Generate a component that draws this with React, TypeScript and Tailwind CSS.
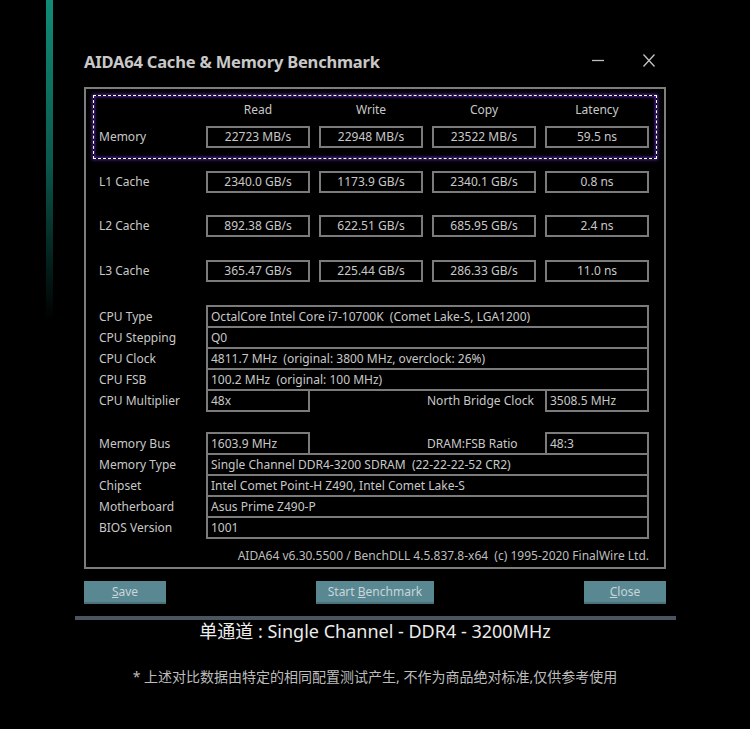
import React from 'react';

type CacheRow = { label: string; values: string[] };

const columns = ['Read', 'Write', 'Copy', 'Latency'];

const memoryRow: CacheRow = {
  label: 'Memory',
  values: ['22723 MB/s', '22948 MB/s', '23522 MB/s', '59.5 ns'],
};

const cacheRows: CacheRow[] = [
  { label: 'L1 Cache', values: ['2340.0 GB/s', '1173.9 GB/s', '2340.1 GB/s', '0.8 ns'] },
  { label: 'L2 Cache', values: ['892.38 GB/s', '622.51 GB/s', '685.95 GB/s', '2.4 ns'] },
  { label: 'L3 Cache', values: ['365.47 GB/s', '225.44 GB/s', '286.33 GB/s', '11.0 ns'] },
];

const grid = 'grid grid-cols-[98px_104px_104px_104px_104px] gap-x-[9px] items-center';
const box = 'border-2 border-[#7b7b7b] flex items-center whitespace-pre';

const ValueRow = ({ row, className = '' }: { row: CacheRow; className?: string }) => (
  <div className={`${grid} h-[22px] ${className}`}>
    <div>{row.label}</div>
    {row.values.map((v) => (
      <div key={v} className={`${box} h-[22px] justify-center`}>
        {v}
      </div>
    ))}
  </div>
);

// one line of the system info table; `first` keeps its top border, the rest overlap
const InfoRow = ({ label, value, first }: { label: string; value: string; first?: boolean }) => (
  <div className={`${grid} h-[23px] ${first ? '' : '-mt-[2px]'}`}>
    <div>{label}</div>
    <div className={`${box} col-span-4 h-[23px] px-[3px]`}>{value}</div>
  </div>
);

const SplitRow = ({
  label,
  value,
  label2,
  value2,
  first,
}: {
  label: string;
  value: string;
  label2: string;
  value2: string;
  first?: boolean;
}) => (
  <div className={`${grid} h-[23px] ${first ? '' : '-mt-[2px]'}`}>
    <div>{label}</div>
    <div className={`${box} h-[23px] px-[3px]`}>{value}</div>
    <div className="col-start-4 -ml-[5px] whitespace-nowrap">{label2}</div>
    <div className={`${box} h-[23px] px-[3px]`}>{value2}</div>
  </div>
);

const Btn = ({ children, w }: { children: React.ReactNode; w: string }) => (
  <button
    className={`${w} h-[23px] bg-[#5a8892] border-b-2 border-[#4a727b] text-[12px] text-[#c7d6d9] flex items-center justify-center`}
  >
    {children}
  </button>
);

export default function App() {
  return (
    <div
      className="relative w-[750px] h-[729px] bg-black overflow-hidden flex flex-col items-center text-[#c8c8c8]"
      style={{ fontFamily: '"Noto Sans", "Noto Sans CJK SC", sans-serif' }}
    >
      {/* accent strip on the left edge */}
      <div className="absolute left-[46px] top-0 w-[7px] h-[320px] bg-gradient-to-b from-[#0f8c77] via-[#0b5a4e] to-transparent" />

      <div className="w-[582px] pt-[50px] text-[12px]">
        <div className="flex items-center justify-between h-[24px]">
          <h1 className="text-[16.5px] font-bold text-[#c8c8c8] tracking-[-0.2px]">
            AIDA64 Cache &amp; Memory Benchmark
          </h1>
          <div className="flex items-center gap-[39px] pr-[11px] -mt-[4px]">
            <svg width="12" height="12" viewBox="0 0 12 12">
              <line x1="0" y1="6.5" x2="12" y2="6.5" stroke="#bdbdbd" strokeWidth="1.3" />
            </svg>
            <svg width="12" height="13" viewBox="0 0 12 13">
              <path d="M0.5 0.5 L11.5 12.5 M11.5 0.5 L0.5 12.5" stroke="#c4c4c4" strokeWidth="1.3" />
            </svg>
          </div>
        </div>

        <div className="mt-[13px] h-[482px] border-2 border-[#7d7d7d] px-[7px] pt-[6px]">
          <div className="border border-dashed border-white shadow-[0_0_3px_1px_#4c2596,inset_0_0_3px_1px_#4c2596] pl-[5px] pt-[4px] pb-[10px]">
            <div className={`${grid} h-[20px]`}>
              <div />
              {columns.map((c) => (
                <div key={c} className="text-center">
                  {c}
                </div>
              ))}
            </div>
            <ValueRow row={memoryRow} className="mt-[6px]" />
          </div>

          <div className="pl-[6px]">
            <ValueRow row={cacheRows[0]} className="mt-[12px]" />
            <ValueRow row={cacheRows[1]} className="mt-[22px]" />
            <ValueRow row={cacheRows[2]} className="mt-[23px]" />

            <div className="mt-[23px]">
              <InfoRow first label="CPU Type" value="OctalCore Intel Core i7-10700K  (Comet Lake-S, LGA1200)" />
              <InfoRow label="CPU Stepping" value="Q0" />
              <InfoRow label="CPU Clock" value="4811.7 MHz  (original: 3800 MHz, overclock: 26%)" />
              <InfoRow label="CPU FSB" value="100.2 MHz  (original: 100 MHz)" />
              <SplitRow label="CPU Multiplier" value="48x" label2="North Bridge Clock" value2="3508.5 MHz" />
            </div>

            <div className="mt-[20px]">
              <SplitRow first label="Memory Bus" value="1603.9 MHz" label2="DRAM:FSB Ratio" value2="48:3" />
              <InfoRow label="Memory Type" value="Single Channel DDR4-3200 SDRAM  (22-22-22-52 CR2)" />
              <InfoRow label="Chipset" value="Intel Comet Point-H Z490, Intel Comet Lake-S" />
              <InfoRow label="Motherboard" value="Asus Prime Z490-P" />
              <InfoRow label="BIOS Version" value="1001" />
            </div>

            <div className="w-[550px] mt-[9px] h-[16px] leading-[16px] text-right text-[#bdbdbd] whitespace-pre">
              AIDA64 v6.30.5500 / BenchDLL 4.5.837.8-x64  (c) 1995-2020 FinalWire Ltd.
            </div>
          </div>
        </div>

        <div className="mt-[12px] flex justify-between">
          <Btn w="w-[82px]">
            <span className="underline">S</span>ave
          </Btn>
          <Btn w="w-[118px]">
            Start&nbsp;<span className="underline">B</span>enchmark
          </Btn>
          <Btn w="w-[82px]">
            <span className="underline">C</span>lose
          </Btn>
        </div>
      </div>

      <div className="mt-[12px] w-[601px] h-[4px] bg-[#4b5562]" />
      <div className="h-[22px] leading-[22px] text-[18px] text-[#ececec] whitespace-pre">
        单通道 : Single Channel - DDR4 - 3200MHz
      </div>
      <div className="mt-[25px] h-[20px] leading-[20px] text-[14px] text-[#bcbcbc]">
        * 上述对比数据由特定的相同配置测试产生, 不作为商品绝对标准,仅供参考使用
      </div>
    </div>
  );
}
